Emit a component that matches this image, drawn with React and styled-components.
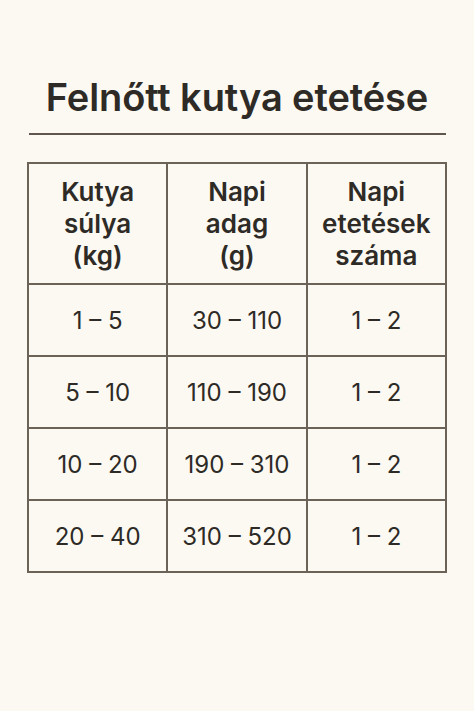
import React from "react";
import styled, { createGlobalStyle } from "styled-components";

const GlobalStyle = createGlobalStyle`
    html, body {
        margin: 0;
        padding: 0;
        background: #fbf9f2;
    }
    body {
        font-family: Inter, "Noto Sans", sans-serif;
        color: #2e2a26;
    }
`

const Page = styled.div`
    width: 474px;
    height: 711px;
    display: flex;
    flex-direction: column;
    align-items: center;
    padding-top: 73px;
    box-sizing: border-box;
`

const Title = styled.h1`
    margin: 0;
    font-size: 38px;
    font-weight: 600;
    line-height: 48px;
    letter-spacing: -0.1px;
    color: #2e2a26;
`

const Rule = styled.div`
    width: 417px;
    height: 2px;
    background: #5f574d;
    margin-top: 12px;
    margin-bottom: 27px;
`

const Table = styled.table`
    border-collapse: collapse;
    width: 420px;
    table-layout: fixed;
`

const HeadCell = styled.th`
    border: 2px solid #6b6358;
    height: 119px;
    padding: 0;
    font-size: 26px;
    font-weight: 600;
    line-height: 32px;
    text-align: center;
    vertical-align: middle;
`

const Cell = styled.td`
    border: 2px solid #6b6358;
    height: 70px;
    padding: 0;
    font-size: 24px;
    font-weight: 400;
    text-align: center;
    vertical-align: middle;
`

const rows = [
    ["1 – 5", "30 – 110", "1 – 2"],
    ["5 – 10", "110 – 190", "1 – 2"],
    ["10 – 20", "190 – 310", "1 – 2"],
    ["20 – 40", "310 – 520", "1 – 2"],
];

function App() {
    return (
        <>
            <GlobalStyle />
            <Page>
                <Title>Felnőtt kutya etetése</Title>
                <Rule />
                <Table>
                    <thead>
                        <tr>
                            <HeadCell>Kutya<br />súlya<br />(kg)</HeadCell>
                            <HeadCell>Napi<br />adag<br />(g)</HeadCell>
                            <HeadCell>Napi<br />etetések<br />száma</HeadCell>
                        </tr>
                    </thead>
                    <tbody>
                        {rows.map((row, i) => (
                            <tr key={i}>
                                {row.map((v, j) => <Cell key={j}>{v}</Cell>)}
                            </tr>
                        ))}
                    </tbody>
                </Table>
            </Page>
        </>
    );
}

export default App;
